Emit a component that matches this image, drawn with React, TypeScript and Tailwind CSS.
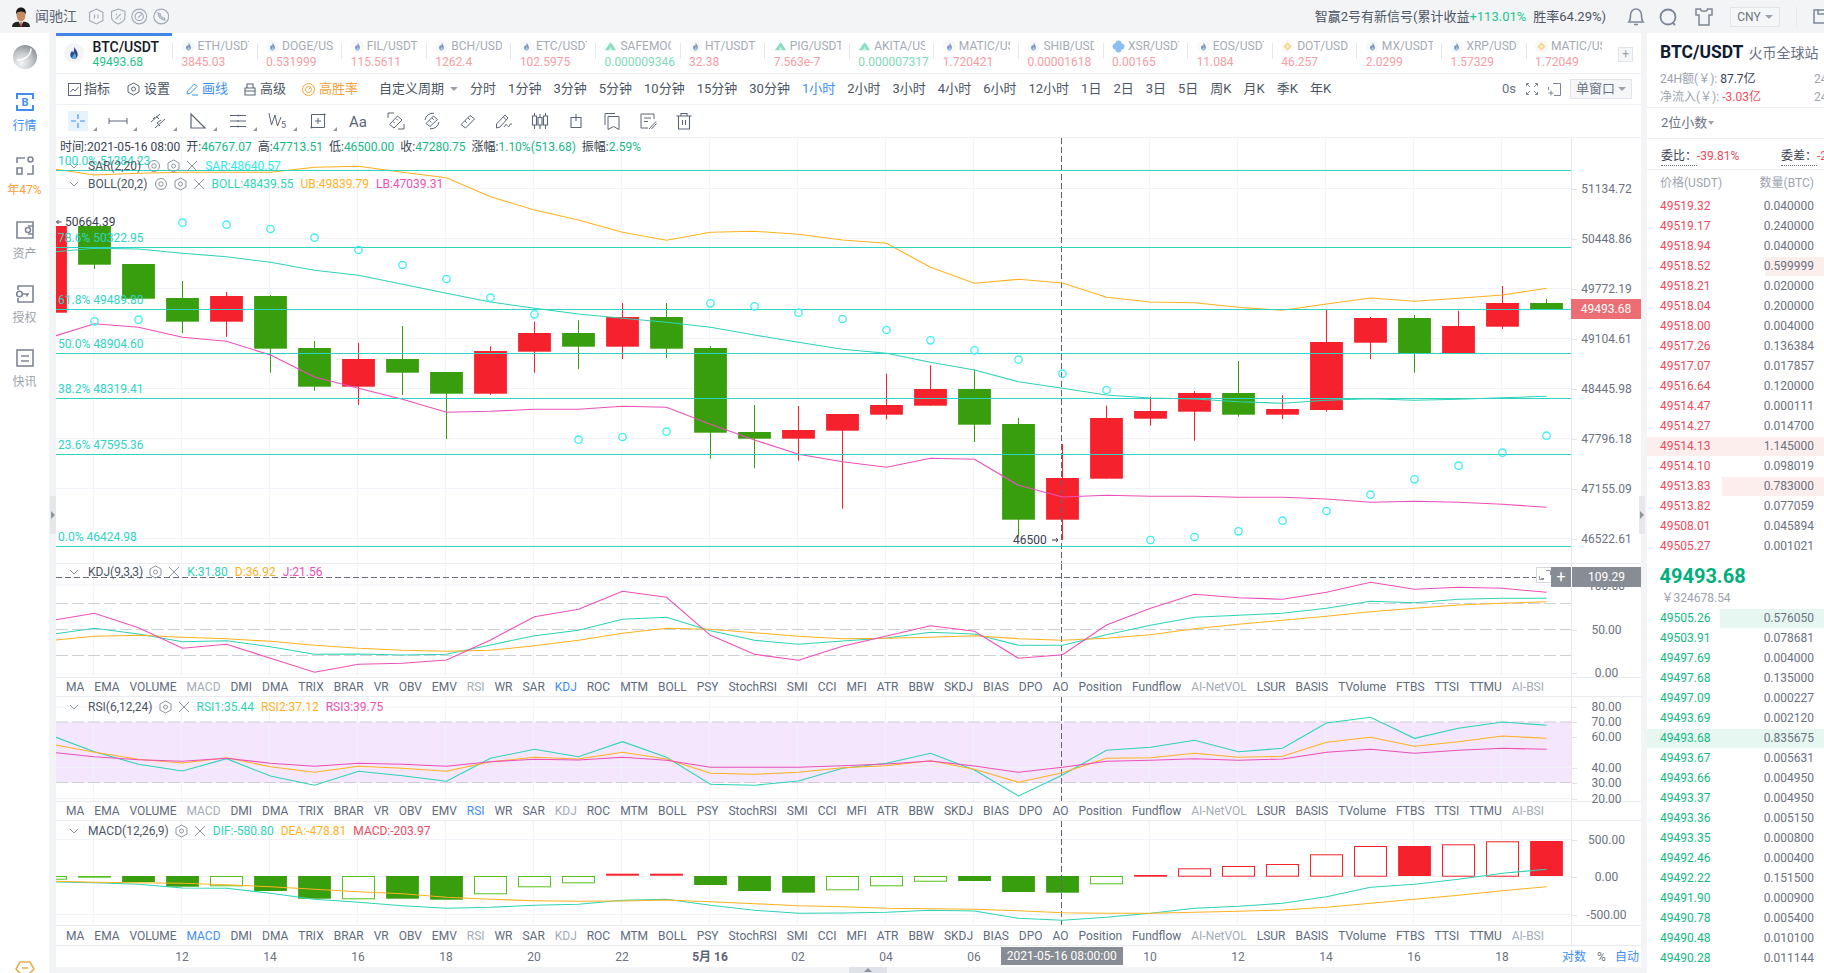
import React from "react";

const X = (i: number) => 50.5 + 44 * i;
const GREEN = "#389e0d";
const RED = "#f5222d";
const TEAL = "#2fd3b5";
const ORANGE = "#ffb11f";
const PINK = "#ec4fb8";
const FIB = "#2dd4c4";
const CROSS = 1061.5;

const candles: [number, number, number, number, "r" | "g"][] = [
  [226, 312.7, 226, 312.7, "r"], [226, 264.7, 226, 269, "g"], [264, 298.7, 264, 298.7, "g"], [298, 321.7, 281, 333, "g"],
  [296, 321.7, 292, 336.7, "r"], [296, 348.7, 295, 372.7, "g"], [348, 386.7, 341, 390.7, "g"], [359, 386.7, 342.7, 405, "r"],
  [359, 372.7, 326, 395, "g"], [372, 393.7, 372, 439, "g"], [351, 393.7, 346.3, 395, "r"], [333, 351.7, 321.7, 372.7, "r"],
  [333, 346.7, 320.3, 369.3, "g"], [317, 346.7, 303, 359, "r"], [317, 348.7, 303, 358, "g"], [348, 432.7, 346, 458.7, "g"],
  [432, 438.7, 405, 468.3, "g"], [430, 438.7, 406, 460.7, "r"], [414, 430.7, 414, 508.7, "r"], [405, 414.7, 373.7, 419.3, "r"],
  [389, 405.7, 365.3, 405.7, "r"], [389, 424.7, 369.3, 442, "g"], [424, 519.7, 418, 536.7, "g"], [478, 519.7, 444, 540, "r"],
  [418, 478.7, 405.7, 478.7, "r"], [411, 418.7, 396.7, 425.7, "r"], [393, 411.7, 391, 440.7, "r"], [393, 414.7, 361, 416.7, "g"],
  [409, 414.7, 395.3, 419, "r"], [342, 410, 310, 411.7, "r"], [318, 342.7, 317, 359, "r"], [318, 353, 315, 372.7, "g"],
  [326, 353, 310.7, 353, "r"], [303, 326.7, 286, 329, "r"], [303, 309, 299, 309, "g"],
];

const UB = [169.3, 175, 173.3, 172.3, 172.3, 172.3, 167.3, 166.3, 172.3, 177.7, 196.7, 210, 220, 232.3, 240.3, 232.3, 231.3, 234.3, 240, 243.3, 267.3, 283.3, 279.3, 283, 297.3, 302, 302.7, 307.3, 310.3, 304, 298, 301.3, 298.3, 295, 288.3];
const MB = [251.7, 248.3, 249, 253.3, 256.7, 262.3, 270.3, 275.3, 284.3, 293.3, 302, 308.3, 314, 318.3, 322.3, 327.3, 335, 342.3, 349.3, 353.3, 362.3, 370, 381.7, 388.3, 395, 398, 399, 401.7, 403.3, 400.3, 398.7, 400.3, 399.3, 397.7, 396.3];
const LB = [335.7, 323.7, 327.3, 337.3, 341.3, 355, 377, 388.3, 399.3, 412.3, 411.3, 409.3, 409.3, 406.3, 407.3, 424.3, 440, 454.3, 461.7, 467.3, 458.3, 459.3, 485.3, 497, 495.3, 496.3, 496.3, 497.3, 497.3, 499, 502.3, 501.3, 502.3, 504.3, 507.3];
const SAR = [0, 321.3, 319.7, 222.7, 224.7, 229, 237.7, 250, 265, 279, 297.7, 314.3, 439.7, 437, 431.7, 303.3, 306.3, 312.7, 319, 330, 340.3, 350.3, 359.7, 373.7, 390, 540, 537, 531.3, 520.7, 511, 494.7, 479.3, 465.7, 452.7, 435.7];

const K = [633.7, 628.3, 634, 641.7, 640.7, 646.7, 654.3, 654, 655, 654.3, 645, 635.7, 630.3, 619.3, 617.3, 630.7, 640.3, 644.3, 641, 638, 632.3, 634, 645.3, 645.3, 634.7, 625.3, 617.3, 615.3, 613.3, 608.3, 601.3, 602.7, 599.3, 598.3, 598.3];
const D = [640, 636.3, 635.3, 637.3, 638.7, 641.3, 645.3, 648.3, 650.3, 651.3, 650.3, 645.7, 640.3, 633.3, 628.3, 629.3, 632.7, 636.3, 638.7, 638.3, 637.3, 635.7, 638.7, 640.3, 638.3, 634.7, 628.7, 624.3, 620.3, 616.3, 611.7, 608.3, 605, 603.3, 601.7];
const J = [619.7, 613.3, 627.7, 648.3, 644.3, 658.3, 672.3, 664.3, 663.3, 660, 640, 616.7, 609.3, 591.3, 597.3, 635.3, 654.3, 660.3, 646.3, 636, 625.7, 631.3, 658.3, 654.7, 625, 608.3, 594.3, 597.7, 599.3, 592.3, 582.3, 589.3, 587.3, 588.3, 592.3];

const R1 = [737.3, 751.7, 764.3, 771, 758.7, 776, 785.3, 771.3, 775.7, 781.3, 758.3, 749.3, 756.7, 741.7, 757.3, 784.3, 785.3, 781, 768.3, 763.3, 753.3, 770, 796, 775, 750.3, 747.3, 740.3, 751.7, 748.3, 723, 717.3, 738.3, 728.3, 722, 725.3];
const R2 = [745, 752.3, 759.3, 763, 757.7, 766.7, 772.3, 766.3, 768.3, 771.3, 761.7, 757.3, 759, 752.3, 759, 773.3, 774.3, 772.3, 767.7, 765.7, 760.7, 769.3, 782.3, 772.7, 758.3, 757.7, 753.3, 757.3, 756.3, 742.3, 737.3, 746.3, 741.7, 736, 738.3];
const R3 = [752.7, 756.7, 759.7, 761.3, 758.3, 763.3, 766.3, 763.3, 764.3, 766.3, 761.7, 759.3, 760, 757.3, 760.3, 767.3, 767.3, 767.3, 765.7, 764, 761, 766, 772.3, 767.3, 761.3, 760.3, 758.7, 760.3, 759, 752.3, 749.3, 753.3, 750.3, 748.3, 749.3];

const DIF = [882, 882.7, 884.3, 888, 888.3, 893.3, 899.3, 902.3, 905.7, 908.3, 907.3, 905.3, 904.3, 900.3, 899.3, 905.3, 910.3, 913.3, 913, 912.3, 910.3, 911, 918.3, 920.3, 917.3, 913.3, 908.3, 906.3, 903.3, 896.7, 887.3, 884.3, 879.3, 873.3, 869.3];
const DEA = [881.3, 882.3, 882.7, 883.3, 884.7, 886.7, 889.3, 891.7, 893.7, 897.3, 899.3, 900.7, 901.3, 901, 900, 901.7, 903.7, 905.7, 906.7, 908.3, 908.7, 909.3, 910.7, 912.7, 913.3, 913.3, 912.3, 911.3, 910, 907.3, 903.3, 899.3, 895.3, 890.7, 886.7];
const BARS: [number, number, "s" | "h" | "l" | "r" | "o"][] = [
  [876, 878.7, "h"], [876, 877.7, "l"], [876, 882, "s"], [876, 886.7, "s"], [876, 885.3, "h"], [876, 891, "s"], [876, 898.7, "s"], [876, 898.3, "h"], [876, 898.7, "s"], [876, 899.7, "s"],
  [876, 893.3, "h"], [876, 886.3, "h"], [876, 882.3, "h"], [873.7, 875.7, "r"], [873.7, 875.7, "r"], [876, 885, "s"], [876, 891, "s"], [876, 892.7, "s"], [876, 889.3, "h"], [876, 885.3, "h"],
  [876, 880.7, "h"], [876, 881, "s"], [876, 892, "s"], [876, 892.7, "s"], [876, 883.3, "h"], [875, 876.7, "r"], [868.3, 875.7, "o"], [866, 875.7, "o"], [864, 875.7, "o"], [854.3, 875.7, "o"],
  [846, 875.7, "o"], [846, 876, "r"], [844.3, 875.7, "o"], [841.3, 875.7, "o"], [841, 876, "r"],
];

const pts = (a: number[]) => a.map((y, i) => `${i === 0 ? 56 : X(i)},${y}`).join(" ");
const VGRID = Array.from({ length: 17 }, (_, i) => 93.3 + 88 * i);

function Grid({ top, h, lines }: { top: number; h: number; lines: number[] }) {
  return (
    <g stroke="#f1f3f8" strokeWidth="1">
      {VGRID.map((x) => <line key={x} x1={x} x2={x} y1={top} y2={top + h} />)}
      {lines.map((y) => <line key={y} x1={56} x2={1571} y1={y} y2={y} />)}
    </g>
  );
}
const Cross = ({ top, h }: { top: number; h: number }) => (
  <line x1={CROSS} x2={CROSS} y1={top} y2={top + h} stroke="#5f6670" strokeDasharray="6 3" strokeWidth="1" />
);
const Line = ({ d, c }: { d: number[]; c: string }) => <polyline points={pts(d)} fill="none" stroke={c} strokeWidth="1.1" />;

function Axis({ top, ticks }: { top: number; ticks: [number, string][] }) {
  return (
    <div className="relative w-[70px] border-l border-[#e6e8ed] text-[12px] text-[#6b7280]">
      {ticks.map(([y, t]) => (
        <React.Fragment key={t}>
          <div className="absolute left-0 h-px w-[5px] bg-[#e0e3e8]" style={{ top: y - top }} />
          <div className="absolute left-0 w-full text-center leading-4" style={{ top: y - top - 8 }}>{t}</div>
        </React.Fragment>
      ))}
    </div>
  );
}

const Gear = () => (
  <svg width="13" height="14" viewBox="0 0 13 14" fill="none" stroke="#8d95a1" strokeWidth="1"><path d="M6.5 1 L12 4 V10 L6.5 13 L1 10 V4 Z" /><circle cx="6.5" cy="7" r="2" /></svg>
);
const Eye = () => (
  <svg width="14" height="14" viewBox="0 0 14 14" fill="none" stroke="#8d95a1" strokeWidth="1"><circle cx="7" cy="7" r="5.5" /><circle cx="7" cy="7" r="2.2" /></svg>
);
const Close = () => (
  <svg width="12" height="12" viewBox="0 0 12 12" fill="none" stroke="#8d95a1" strokeWidth="1"><path d="M1 1 L11 11 M11 1 L1 11" /></svg>
);
const Chev = () => (
  <svg width="10" height="6" viewBox="0 0 10 6" fill="none" stroke="#8d95a1" strokeWidth="1"><path d="M1 1 L5 5 L9 1" /></svg>
);

const NAMES = ["MA", "EMA", "VOLUME", "MACD", "DMI", "DMA", "TRIX", "BRAR", "VR", "OBV", "EMV", "RSI", "WR", "SAR", "KDJ", "ROC", "MTM", "BOLL", "PSY", "StochRSI", "SMI", "CCI", "MFI", "ATR", "BBW", "SKDJ", "BIAS", "DPO", "AO", "Position", "Fundflow", "AI-NetVOL", "LSUR", "BASIS", "TVolume", "FTBS", "TTSI", "TTMU", "AI-BSI"];
const DIM = ["MACD", "RSI", "KDJ", "AI-NetVOL", "AI-BSI"];

function IndicatorRow({ active, h }: { active: string; h: string }) {
  return (
    <div className={`flex ${h} border-t border-b border-[#e9ebef]`}>
      <div className="flex w-[1515px] items-center gap-[9.95px] overflow-hidden pl-[10px] text-[12px] whitespace-nowrap">
        {NAMES.map((n) => (
          <span key={n} className={n === active ? "text-[#3f8ef0]" : DIM.includes(n) ? "text-[#a4abb6]" : "text-[#5f6b7c]"}>{n}</span>
        ))}
      </div>
      <div className="w-[70px] border-l border-[#e6e8ed]" />
    </div>
  );
}

function Legend({ top, name, icons, vals }: { top: string; name: string; icons?: boolean; vals: [string, string][] }) {
  return (
    <div className={`absolute left-[13px] ${top} flex h-4 items-center text-[12px] leading-4 whitespace-nowrap`}>
      <span className="mr-[9px] flex w-[10px] justify-center"><Chev /></span>
      <span className="mr-[6px] text-[#4b5563]">{name}</span>
      {icons && <span className="mr-[6px] flex"><Eye /></span>}
      <span className="mr-[6px] flex"><Gear /></span>
      <span className="mr-[7px] flex"><Close /></span>
      <div className="flex gap-[7px]">
        {vals.map(([t, c]) => <span key={t} style={{ color: c }}>{t}</span>)}
      </div>
    </div>
  );
}

type Coin = "h" | "m" | "b" | "x";
const TABS: [string, string, "r" | "g", Coin][] = [
  ["ETH/USDT", "3845.03", "r", "h"], ["DOGE/USDT", "0.531999", "r", "h"], ["FIL/USDT", "115.5611", "r", "h"], ["BCH/USDT", "1262.4", "r", "h"],
  ["ETC/USDT", "102.5975", "r", "h"], ["SAFEMOON", "0.000009346", "g", "m"], ["HT/USDT", "32.38", "r", "h"], ["PIG/USDT", "7.563e-7", "r", "m"],
  ["AKITA/USDT", "0.000007317", "g", "m"], ["MATIC/USDT", "1.720421", "r", "h"], ["SHIB/USDT", "0.00001618", "r", "h"], ["XSR/USDT", "0.00165", "r", "x"],
  ["EOS/USDT", "11.084", "r", "h"], ["DOT/USDT", "46.257", "r", "b"], ["MX/USDT", "2.0299", "r", "h"], ["XRP/USDT", "1.57329", "r", "h"], ["MATIC/USDT", "1.72049", "r", "b"],
];

function CoinIcon({ t, s = 14, dim }: { t: Coin; s?: number; dim?: boolean }) {
  return (
    <svg width={s} height={s} viewBox="0 0 14 14" className={`shrink-0 ${dim ? "opacity-60" : ""}`}>
      {t !== "x" && t !== "m" && <circle cx="7" cy="7" r="7" fill="#f2f4f7" />}
      {t === "h" && (
        <>
          <path d="M7.3 2.6 C7.6 4.2 9.6 5.4 9.6 8 C9.6 10 8.3 11.2 7 11.2 C5.6 11.2 4.4 10 4.4 8.3 C4.4 6.9 5.2 6.1 5.7 5.4 C5.9 6.1 6.2 6.5 6.5 6.7 C7.1 5.5 7 3.9 7.3 2.6 Z" fill="#2a4b8d" />
          <path d="M7.3 6.8 C7.7 8 8.7 8.7 8.5 9.9 C8.3 10.7 7.7 11.2 7 11.2 C6.1 11.2 5.7 10.5 5.8 9.9 C5.9 9 6.9 8.3 7.3 6.8 Z" fill="#5aa6e8" />
        </>
      )}
      {t === "m" && (
        <>
          <path d="M1 11 L5 5 L7 2.5 L9.5 5.5 L13 11 Z" fill="#3fc8a0" />
          <path d="M5 11 L7 7 L9 11 Z" fill="#a8e8d4" />
        </>
      )}
      {t === "b" && <path d="M7 2.5 L11.5 7 L7 11.5 L2.5 7 Z M7 5.5 L5.5 7 L7 8.5 L8.5 7 Z" fill="#f3c13c" fillRule="evenodd" />}
      {t === "x" && (
        <>
          <circle cx="7" cy="3.8" r="3.2" fill="#3f93e8" /><circle cx="7" cy="10.2" r="3.2" fill="#3f93e8" />
          <circle cx="3.8" cy="7" r="3.2" fill="#3f93e8" /><circle cx="10.2" cy="7" r="3.2" fill="#3f93e8" />
        </>
      )}
    </svg>
  );
}

const S = { fill: "none", stroke: "#5b6576", strokeWidth: 1 };
const DRAW: React.ReactNode[] = [
  <path d="M10 3v5M10 12v5M3 10h5M12 10h5" fill="none" stroke="#3f8ef0" strokeWidth="1.1" />,
  <path d="M1 7v6M19 7v6M1 10h18" {...S} />,
  <path d="M3 11 L12 3 M7 17 L17 8 M5 8 l2-2 M8 5 l3 3 M9 12 l3 3 M13 9 l-4 3" {...S} />,
  <path d="M3 3 V17 H17 Z" {...S} strokeWidth="1.2" />,
  <path d="M2 4.5h16M2 10h16M2 15.5h16M10 3.5v2M10 9v2M10 14.5v2" {...S} />,
  <>
    <path d="M1 2 L3.5 14 L7 4 L9.5 15 L13 6" {...S} />
    <text x="13" y="17" fontSize="9" fill="#5b6576">5</text>
  </>,
  <>
    <path d="M3.5 3.5h13v13h-13z M10 7v6 M7 10h6" {...S} />
    <circle cx="16.5" cy="3.5" r="1.1" fill="#5b6576" /><circle cx="3.5" cy="16.5" r="1.1" fill="#5b6576" />
  </>,
  <text x="10" y="15.5" textAnchor="middle" fontSize="15" fill="#5b6576">Aa</text>,
  <path d="M2 7V2h6 M18 13v5h-6 M3.5 13.5 L11.5 5 L16 9 L8 17 Z M7 10.5 l1.8 1.8 M10 7.5 l1.8 1.8" {...S} />,
  <path d="M3 9 A8 8 0 0 1 12 2.3 M17 11 A8 8 0 0 1 8 17.7 M4 12.5 L11.5 5 L15.5 8.5 L8 15.5 Z M7.5 9.5 l1.8 1.8 M10 7 l1.8 1.8" {...S} />,
  <path d="M3 13.5 L12 4.5 L16.5 8 L7.5 17 Z M7 10 l1.8 1.8 M10 7 l1.8 1.8" {...S} />,
  <path d="M2.5 17 L2.5 13 L11 4 L14 7 L6 16 L2.5 17 Z M9.5 6 l3 3 M10 16 q2-4 3.5-1.5 t2 0 t2.5-1.5" {...S} />,
  <path d="M2.5 5h4v9h-4z M8 6.5h4v7.5H8z M13.5 5h4v9h-4z M4.5 2v3 M4.5 14v4 M10 3v3.5 M10 14v4 M15.5 2v3 M15.5 14v4" {...S} strokeWidth="1.1" />,
  <path d="M5 6.5h10v10H5z M10 3v7" {...S} strokeWidth="1.1" />,
  <path d="M3 14V2.5h10 M6 5.5h11v13 l-5.5-3 L6 18.5Z" {...S} />,
  <path d="M16 8V3H3v14h7 M6 7h7 M6 10.5h4 M11 18 L18 10.5 M13.5 18 l5-5.5" {...S} />,
  <path d="M2.5 5h15 M7 5V2.5h6V5 M4.5 5v13h11V5 M8.5 9v5 M11.5 9v5" {...S} strokeWidth="1.1" />,
];

const PERIODS = ["分时", "1分钟", "3分钟", "5分钟", "10分钟", "15分钟", "30分钟", "1小时", "2小时", "3小时", "4小时", "6小时", "12小时", "1日", "2日", "3日", "5日", "周K", "月K", "季K", "年K"];

const ASKS: [string, string][] = [["49519.32", "0.040000"], ["49519.17", "0.240000"], ["49518.94", "0.040000"], ["49518.52", "0.599999"], ["49518.21", "0.020000"], ["49518.04", "0.200000"], ["49518.00", "0.004000"], ["49517.26", "0.136384"], ["49517.07", "0.017857"], ["49516.64", "0.120000"], ["49514.47", "0.000111"], ["49514.27", "0.014700"], ["49514.13", "1.145000"], ["49514.10", "0.098019"], ["49513.83", "0.783000"], ["49513.82", "0.077059"], ["49508.01", "0.045894"], ["49505.27", "0.001021"]];
const BIDS: [string, string][] = [["49505.26", "0.576050"], ["49503.91", "0.078681"], ["49497.69", "0.004000"], ["49497.68", "0.135000"], ["49497.09", "0.000227"], ["49493.69", "0.002120"], ["49493.68", "0.835675"], ["49493.67", "0.005631"], ["49493.66", "0.004950"], ["49493.37", "0.004950"], ["49493.36", "0.005150"], ["49493.35", "0.000800"], ["49492.46", "0.000400"], ["49492.22", "0.151500"], ["49491.90", "0.000900"], ["49490.78", "0.005400"], ["49490.48", "0.010100"], ["49490.28", "0.011144"]];

function Book({ rows, color, bg, widths }: { rows: [string, string][]; color: string; bg: string; widths: Record<string, number> }) {
  return (
    <div className="flex flex-col text-[12px]">
      {rows.map(([p, q]) => (
        <div key={p} className="relative flex h-5 items-center justify-between pl-[13px] pr-[10px]">
          {widths[p] && <div className="absolute inset-y-[0.5px] right-0" style={{ width: widths[p], background: bg }} />}
          <span className="relative" style={{ color }}>{p}</span>
          <span className="relative text-[#6b7280]">{q}</span>
        </div>
      ))}
    </div>
  );
}

function NavItem({ icon, label, color }: { icon: React.ReactNode; label: string; color: string }) {
  return (
    <div className="flex h-[64px] flex-col items-center pt-[10px]">
      <div className="flex h-5 items-center justify-center">{icon}</div>
      <div className="mt-[6px] text-[12px] leading-4" style={{ color }}>{label}</div>
    </div>
  );
}

const NS = { fill: "none", stroke: "#7d8696", strokeWidth: 1.6 };

export default function App() {
  return (
    <div className="flex h-[973px] w-[1824px] flex-col overflow-hidden bg-[#f3f4f6] font-['Roboto','Noto_Sans_CJK_SC',sans-serif] text-[12px]">
      {/* header */}
      <header className="flex h-[33px] shrink-0 items-center pl-[12px]">
        <svg width="18" height="21" viewBox="0 0 18 21" className="shrink-0">
          <rect width="18" height="21" fill="#f4f4f4" />
          <path d="M0 21 C0 16.5 4 15.5 9 15.5 C14 15.5 18 16.5 18 21 Z" fill="#26221f" />
          <path d="M6.5 15 L9 20.5 L11.5 15 Z" fill="#f4f4f4" />
          <path d="M8.4 16 L9.6 16 L9.8 20.5 L8.2 20.5 Z" fill="#b3362e" />
          <ellipse cx="9" cy="9.5" rx="4.4" ry="6" fill="#c58c66" />
          <path d="M4.2 8.5 C3.6 3.5 6 1.5 9 1.5 C12 1.5 14.4 3.5 13.8 8.5 C13 6 11 5.4 9 5.4 C7 5.4 5 6 4.2 8.5 Z" fill="#191919" />
        </svg>
        <span className="ml-[5px] text-[14px] text-[#5b6470]">闻驰江</span>
        <div className="ml-[11px] flex gap-[5px]">
          {[
            <path key="a" d="M8 .8 L14.5 4 V12 L8 15.2 L1.5 12 V4 Z M6.3 6v4 M9.7 6v4" fill="none" stroke="#a4abb6" strokeWidth="1.1" />,
            <path key="b" d="M8 .8 L14.5 3 V9 C14.5 12 11 14 8 15.2 C5 14 1.5 12 1.5 9 V3 Z M10.5 5.5 L5.5 10.5 M5.7 6h1 M9.5 10h1" fill="none" stroke="#a4abb6" strokeWidth="1.1" />,
            <g key="c" fill="none" stroke="#a4abb6" strokeWidth="1.1"><circle cx="8" cy="8" r="7.2" /><circle cx="8" cy="8" r="4" /><path d="M7 9 L11 5" /></g>,
            <g key="d" fill="none" stroke="#a4abb6" strokeWidth="1.1"><circle cx="8" cy="8" r="7.2" /><path d="M5 4.5 C5 8 8 11.5 11.5 11.5 L11 9.5 L9.5 9.5 L7 7 L7 5.5 Z" /></g>,
          ].map((n, i) => <svg key={i} width="16.5" height="17" viewBox="0 0 16 16">{n}</svg>)}
        </div>
        <div className="ml-auto mr-[-1px] flex items-center">
          <span className="text-[13px] text-[#4b5563]">智赢2号有新信号(累计收益<span className="text-[#1fc48f]">+113.01%</span><span className="ml-[7px]">胜率64.29%)</span></span>
          <svg className="ml-[21px]" width="18" height="20" viewBox="0 0 18 20" fill="none" stroke="#7d8696" strokeWidth="1.6"><path d="M2 15 C3.5 13 3.5 11 3.5 8 C3.5 4.5 6 2 9 2 C12 2 14.5 4.5 14.5 8 C14.5 11 14.5 13 16 15 Z M7 17.5 h4" /></svg>
          <svg className="ml-[14px]" width="18" height="20" viewBox="0 0 18 20" fill="none" stroke="#7d8696" strokeWidth="1.8"><circle cx="9" cy="10" r="7.5" /><path d="M13.5 15.5 L16 18" /></svg>
          <svg className="ml-[18px]" width="18" height="18" viewBox="0 0 18 18" fill="none" stroke="#7d8696" strokeWidth="1.5"><path d="M5.5 1 H1 V7 H4 V17 H14 V7 H17 V1 H12.5 C12.5 4 5.5 4 5.5 1 Z" /></svg>
          <div className="ml-[17px] flex h-5 w-[50px] items-center justify-center gap-[4px] border border-[#e2e4e8] bg-[#f5f6f7] text-[12px] text-[#6b7280]">
            CNY<span className="h-0 w-0 border-x-[4px] border-t-[4px] border-x-transparent border-t-[#9ca3af]" />
          </div>
          <div className="ml-[16px] h-[20px] w-px bg-[#e5e7eb]" />
          <svg className="ml-[16px]" width="12" height="17" viewBox="0 0 12 17" fill="none" stroke="#7d8696" strokeWidth="1.5"><path d="M12 2 H1 V15 H12 M5 1 V6 H12" /></svg>
        </div>
      </header>

      <div className="relative flex min-h-0 flex-1">
        {/* sidebar */}
        <aside className="flex w-[49px] shrink-0 flex-col overflow-hidden bg-white">
          <div className="flex h-[49px] shrink-0 items-start justify-center pt-[12px]">
            <svg width="24" height="24" viewBox="0 0 24 24">
              <defs>
                <radialGradient id="sp" cx="35%" cy="75%" r="80%">
                  <stop offset="0%" stopColor="#f4f5f6" />
                  <stop offset="55%" stopColor="#c4c7ca" />
                  <stop offset="100%" stopColor="#8a8e93" />
                </radialGradient>
              </defs>
              <circle cx="12" cy="12" r="12" fill="url(#sp)" />
              <path d="M4 15 C10 16 18 11 18 3.5" fill="none" stroke="#fff" strokeWidth="1.5" />
            </svg>
          </div>
          <NavItem color="#3f8ef0" label="行情" icon={
            <svg width="18" height="18" viewBox="0 0 18 18"><path d="M1 6V1h16v5 M1 12v5h16v-5" fill="none" stroke="#3f8ef0" strokeWidth="2" /><text x="9" y="13" textAnchor="middle" fontSize="11" fontWeight="700" fill="#3f8ef0">B</text></svg>
          } />
          <NavItem color="#f5a23c" label="年47%" icon={
            <svg width="18" height="20" viewBox="0 0 18 20"><path d="M9 2H1v5 M17 9v9h-6" {...NS} /><rect x="1" y="12" width="5" height="6" {...NS} /><circle cx="14.5" cy="3.5" r="2.5" {...NS} /></svg>
          } />
          <NavItem color="#9aa1ac" label="资产" icon={
            <svg width="18" height="18" viewBox="0 0 18 18"><path d="M17 1H1v16h16z" {...NS} /><circle cx="12" cy="9" r="2.5" {...NS} /><path d="M17 5h-5 M17 13h-5" {...NS} /></svg>
          } />
          <NavItem color="#9aa1ac" label="授权" icon={
            <svg width="18" height="18" viewBox="0 0 18 18"><path d="M2 5V1h15v16H2v-4" {...NS} /><circle cx="3.5" cy="9" r="2.8" {...NS} /><path d="M7 9h6 M11 9v2.5" {...NS} /></svg>
          } />
          <NavItem color="#9aa1ac" label="快讯" icon={
            <svg width="18" height="18" viewBox="0 0 18 18"><rect x="1" y="1" width="16" height="16" {...NS} /><path d="M5 7h8 M5 12h8" {...NS} /></svg>
          } />
          <svg className="mx-auto mb-[-7px] mt-auto shrink-0" width="20" height="20" viewBox="0 0 20 20" fill="none" stroke="#e8b04c" strokeWidth="1.6"><path d="M5 2H15 L19 9 L10 18 L1 9 Z M7 8h6" /></svg>
        </aside>
        <div className="w-[7px] shrink-0" />

        {/* main */}
        <main className="flex h-[934px] w-[1585px] shrink-0 flex-col bg-white">
          {/* tabs */}
          <div className="flex h-10 shrink-0 items-stretch overflow-hidden">
            <div className="flex w-[116px] shrink-0 items-start gap-[8.5px] border-t-[3px] border-[#4285e8] pl-[8px]">
              <div className="mt-[7px] flex h-5 w-5 items-center justify-center"><CoinIcon t="h" s={20} /></div>
              <div className="mt-[3px] flex flex-col">
                <span className="text-[14px] leading-[16px] font-medium text-[#111827]">BTC/USDT</span>
                <span className="text-[12px] leading-[14px] text-[#1dbf8e]">49493.68</span>
              </div>
            </div>
            {TABS.map(([n, p, c, t], i) => (
              <div key={i} className="flex w-[84.6px] shrink-0 items-start">
                <div className="mt-[10px] h-[16px] w-px bg-[#e5e7eb]" />
                <div className="flex flex-col pl-[8.5px] pt-[5px]">
                  <div className="flex h-4 items-center gap-[2px]">
                    <CoinIcon t={t} s={13} dim />
                    <span className="ml-[1px] w-[51px] overflow-hidden text-[12px] whitespace-nowrap text-[#a4abb6]">{n}</span>
                  </div>
                  <span className={`text-[12px] leading-4 ${c === "r" ? "text-[#f79da3]" : "text-[#7fd9ba]"}`}>{p}</span>
                </div>
              </div>
            ))}
            <div className="mt-[14px] ml-[8px] flex h-[14.5px] w-[15px] shrink-0 items-center justify-center border border-[#e2e4e8] bg-[#f5f6f7] text-[12px] leading-none text-[#9ca3af]">+</div>
          </div>

          {/* toolbar 1 */}
          <div className="flex h-[31px] shrink-0 items-center border-t border-[#eef0f3] pl-[12px] text-[13px] whitespace-nowrap text-[#4b5563]">
            <svg width="13" height="13" viewBox="0 0 13 13" fill="none" stroke="#5b6576" strokeWidth="1"><rect x="0.5" y="0.5" width="12" height="12" /><path d="M2.5 9 L5 6 L7 8 L10.5 4" /></svg>
            <span className="ml-[3px]">指标</span>
            <svg className="ml-[17px]" width="13" height="14" viewBox="0 0 13 14" fill="none" stroke="#5b6576" strokeWidth="1"><path d="M6.5 1 L12 4 V10 L6.5 13 L1 10 V4 Z" /><circle cx="6.5" cy="7" r="2" /></svg>
            <span className="ml-[4px]">设置</span>
            <svg className="ml-[16px]" width="13" height="14" viewBox="0 0 13 14" fill="none" stroke="#3f8ef0" strokeWidth="1"><path d="M1 12 L1.5 9 L8.5 2 L11 4.5 L4 11.5 Z M6 13h6" /></svg>
            <span className="ml-[3px] text-[#3f8ef0]">画线</span>
            <svg className="ml-[16px]" width="12" height="13" viewBox="0 0 12 13" fill="none" stroke="#5b6576" strokeWidth="1.1"><path d="M3 5V1h6v4 M1 5h10v7H1z M1 8h10" /></svg>
            <span className="ml-[4px]">高级</span>
            <svg className="ml-[16px]" width="13" height="13" viewBox="0 0 13 13" fill="none" stroke="#f5a23c" strokeWidth="1"><circle cx="6.5" cy="6.5" r="6" /><circle cx="6.5" cy="6.5" r="3" /><path d="M6.5 6.5 L9 4" /></svg>
            <span className="ml-[4px] text-[#f5a23c]">高胜率</span>
            <span className="ml-[21px]">自定义周期</span>
            <span className="ml-[6px] h-0 w-0 border-x-[4px] border-t-[4px] border-x-transparent border-t-[#9ca3af]" />
            <div className="ml-[12px] flex gap-3">
              {PERIODS.map((p) => <span key={p} className={p === "1小时" ? "text-[#3f8ef0]" : ""}>{p}</span>)}
            </div>
            <div className="ml-auto flex items-center pr-[9px]">
              <span className="text-[#6b7280]">0s</span>
              <svg className="ml-[10px]" width="12" height="12" viewBox="0 0 12 12" fill="none" stroke="#7d8696" strokeWidth="1"><path d="M0.5 3V.5H3 M9 .5h2.5V3 M11.5 9v2.5H9 M3 11.5H.5V9 M.5 .5 L4 4 M11.5 .5 L8 4 M.5 11.5 L4 8 M11.5 11.5 L8 8" /></svg>
              <svg className="ml-[10px]" width="13" height="13" viewBox="0 0 13 13" fill="none" stroke="#7d8696" strokeWidth="1"><path d="M5 .5h7.5v12H6 M.5 10h5 M3 7.5v5 M.5 7V4" /></svg>
              <div className="ml-[9px] flex h-5 w-[62px] items-center justify-center gap-[3px] border border-[#e2e4e8] bg-[#f5f6f7] text-[13px] text-[#6b7280]">
                单窗口<span className="h-0 w-0 border-x-[4px] border-t-[4px] border-x-transparent border-t-[#9ca3af]" />
              </div>
            </div>
          </div>

          {/* toolbar 2 */}
          <div className="flex h-[33px] shrink-0 items-center border-t border-[#eef0f3] pl-[2px]">
            {DRAW.map((d, i) => (
              <div key={i} className={`relative flex h-5 items-center justify-center ${i < 8 ? "w-10" : "w-9"}`}>
                <svg width="20" height="20" viewBox="0 0 20 20" className={i === 0 ? "bg-[#e8f2fd]" : ""}>{d}</svg>
                {i < 7 && <span className="absolute bottom-[0px] left-[35px] h-0 w-0 border-b-[4px] border-l-[4px] border-b-[#8d95a1] border-l-transparent" />}
              </div>
            ))}
          </div>

          {/* main chart */}
          <div className="relative flex h-[426px] shrink-0 border-t border-[#eef0f3]">
            <div className="relative w-[1515px]">
              <svg className="absolute inset-0" width="1515" height="425" viewBox="56 138 1515 425">
                <Grid top={138} h={425} lines={[188.5, 238.5, 288.5, 338.5, 388.5, 438.5, 488.5, 538.5]} />
                {candles.map(([t, b, wt, wb, c], i) => (
                  <g key={i} fill={c === "r" ? RED : GREEN}>
                    <rect x={X(i) - 0.5} y={wt} width="1" height={wb - wt} />
                    <rect x={X(i) - 16.4} y={t} width="32.8" height={b - t} />
                  </g>
                ))}
                <Cross top={138} h={425} />
                <Line d={UB} c={ORANGE} />
                <Line d={MB} c={TEAL} />
                <Line d={LB} c={PINK} />
                {[170.5, 247.5, 309.5, 353.5, 398.5, 454.5, 546.5].map((y) => <line key={y} x1={56} x2={1571} y1={y} y2={y} stroke={FIB} strokeWidth="1" />)}
                {SAR.map((y, i) => i > 0 && <circle key={i} cx={X(i)} cy={y} r="3.7" fill="none" stroke="#3ef0f0" strokeWidth="1.3" />)}
                <g fontSize="12" fill={FIB}>
                  <text x="58" y="165">100.0% 51384.23</text>
                  <text x="58" y="241.5">78.6% 50322.95</text>
                  <text x="58" y="303.5">61.8% 49489.80</text>
                  <text x="58" y="347.5">50.0% 48904.60</text>
                  <text x="58" y="393">38.2% 48319.41</text>
                  <text x="58" y="449">23.6% 47595.36</text>
                  <text x="58" y="541">0.0% 46424.98</text>
                </g>
                <text x="65" y="226" fontSize="12" fill="#374151">50664.39</text>
                <path d="M56.5 222 h5 M56.5 222 l2-2 M56.5 222 l2 2" stroke="#374151" strokeWidth="1" fill="none" />
                <text x="1013" y="544" fontSize="12" fill="#374151">46500</text>
                <path d="M1052 540 h6 M1058 540 l-2-2 M1058 540 l-2 2" stroke="#374151" strokeWidth="1" fill="none" />
              </svg>
              <div className="absolute left-[4px] top-[1px] flex h-4 items-center text-[12px] leading-4 whitespace-nowrap text-[#374151]">
                时间:2021-05-16 08:00
                {[["开:", "46767.07"], ["高:", "47713.51"], ["低:", "46500.00"], ["收:", "47280.75"], ["涨幅:", "1.10%(513.68)"], ["振幅:", "2.59%"]].map(([a, b]) => (
                  <span key={a} className="ml-[6px]">{a}<span className="text-[#14b885]">{b}</span></span>
                ))}
              </div>
              <Legend top="top-[20px]" name="SAR(2,20)" icons vals={[["SAR:48640.57", "#2bebea"]]} />
              <Legend top="top-[38px]" name="BOLL(20,2)" icons vals={[["BOLL:48439.55", "#2fd3b5"], ["UB:49839.79", ORANGE], ["LB:47039.31", PINK]]} />
            </div>
            <Axis top={138} ticks={[[188.5, "51134.72"], [238.5, "50448.86"], [288.5, "49772.19"], [338.5, "49104.61"], [388.5, "48445.98"], [438.5, "47796.18"], [488.5, "47155.09"], [538.5, "46522.61"]]} />
            <div className="absolute left-[1515px] top-[161px] flex h-5 w-[70px] items-center justify-center bg-[#ec6d73] text-[12px] text-white">49493.68</div>
          </div>

          {/* KDJ */}
          <div className="relative flex h-[114px] shrink-0 border-t border-[#e9ebef]">
            <div className="relative w-[1515px]">
              <svg className="absolute inset-0" width="1515" height="113" viewBox="56 564 1515 113">
                <Grid top={564} h={113} lines={[585, 674]} />
                <g stroke="#cfd0d4" strokeDasharray="12 4">
                  <line x1="56" x2="1571" y1="603.5" y2="603.5" />
                  <line x1="56" x2="1571" y1="629.5" y2="629.5" />
                  <line x1="56" x2="1571" y1="655.5" y2="655.5" />
                </g>
                <line x1="56" x2="1571" y1="577.5" y2="577.5" stroke="#666c75" strokeDasharray="6 3" />
                <Cross top={564} h={113} />
                <Line d={K} c={TEAL} />
                <Line d={D} c={ORANGE} />
                <Line d={J} c={PINK} />
              </svg>
              <Legend top="top-[0px]" name="KDJ(9,3,3)" vals={[["K:31.80", TEAL], ["D:36.92", ORANGE], ["J:21.56", PINK]]} />
            </div>
            <Axis top={564} ticks={[[586, "100.00"], [629.5, "50.00"], [673, "0.00"]]} />
            <div className="absolute left-[1479.5px] top-[3px] flex h-[16px] w-[18px] items-center justify-center border border-[#d4d7dc] bg-white">
              <svg width="12" height="10" viewBox="0 0 12 10" fill="none" stroke="#8d95a1" strokeWidth="1"><path d="M7 .5h4.5V5 M.5 6v3.5H5 M2 8.5h3" /></svg>
            </div>
            <div className="absolute left-[1495px] top-[3px] flex h-5 w-[90px] items-center bg-[#888c94] text-[12px] text-white">
              <span className="w-[20px] text-center text-[16px] leading-none">+</span>
              <span className="h-full w-px bg-white" />
              <span className="flex-1 text-center">109.29</span>
            </div>
          </div>
          <IndicatorRow active="KDJ" h="h-[20px]" />

          {/* RSI */}
          <div className="relative flex h-[104px] shrink-0">
            <div className="relative w-[1515px]">
              <svg className="absolute inset-0" width="1515" height="104" viewBox="56 697 1515 104">
                <rect x="56" y="722" width="1515" height="60.5" fill="#f3e6fd" />
                <Grid top={697} h={104} lines={[707, 767.5, 798.5]} />
                <g stroke="#cfcbd8" strokeDasharray="12 4">
                  <line x1="56" x2="1571" y1="722" y2="722" />
                  <line x1="56" x2="1571" y1="782.5" y2="782.5" />
                </g>
                <Cross top={697} h={104} />
                <Line d={R1} c={TEAL} />
                <Line d={R2} c={ORANGE} />
                <Line d={R3} c={PINK} />
              </svg>
              <Legend top="top-[1.5px]" name="RSI(6,12,24)" vals={[["RSI1:35.44", TEAL], ["RSI2:37.12", ORANGE], ["RSI3:39.75", PINK]]} />
            </div>
            <Axis top={697} ticks={[[706.5, "80.00"], [722, "70.00"], [737, "60.00"], [767.5, "40.00"], [782.5, "30.00"], [798.5, "20.00"]]} />
          </div>
          <IndicatorRow active="RSI" h="h-[20px]" />

          {/* MACD */}
          <div className="relative flex h-[104px] shrink-0">
            <div className="relative w-[1515px]">
              <svg className="absolute inset-0" width="1515" height="104" viewBox="56 821 1515 104">
                <Grid top={821} h={104} lines={[839.5, 876.5, 914.5]} />
                {BARS.map(([t, b, k], i) => {
                  const hollow = k === "h" || k === "o";
                  const c = k === "s" ? GREEN : k === "h" || k === "l" ? "#52c41a" : RED;
                  return hollow ? (
                    <rect key={i} x={X(i) - 16} y={t + 0.5} width="32" height={b - t} fill="#fff" stroke={c} strokeWidth="1" />
                  ) : (
                    <rect key={i} x={X(i) - 16.4} y={t} width="32.8" height={b - t} fill={c} />
                  );
                })}
                <Cross top={821} h={104} />
                <Line d={DIF} c={TEAL} />
                <Line d={DEA} c={ORANGE} />
              </svg>
              <Legend top="top-[1.5px]" name="MACD(12,26,9)" vals={[["DIF:-580.80", TEAL], ["DEA:-478.81", ORANGE], ["MACD:-203.97", "#f04a5b"]]} />
            </div>
            <Axis top={821} ticks={[[839.5, "500.00"], [876.5, "0.00"], [914.5, "-500.00"]]} />
          </div>
          <IndicatorRow active="MACD" h="h-[21px]" />

          {/* time axis */}
          <div className="relative h-[21px] shrink-0 text-[12px] text-[#6b7280]">
            {[["12", 181.5], ["14", 269.5], ["16", 357.5], ["18", 445.5], ["20", 533.5], ["22", 621.5], ["02", 797.5], ["04", 885.5], ["06", 973.5], ["10", 1149.5], ["12", 1237.5], ["14", 1325.5], ["16", 1413.5], ["18", 1501.5]].map(([t, x]) => (
              <span key={String(x)} className="absolute top-[3px] w-8 text-center leading-4" style={{ left: (x as number) - 56 - 16 + 0.5 }}>{t}</span>
            ))}
            <span className="absolute left-[634px] top-[3px] w-10 text-center leading-4 font-bold text-[#5b6576]">5月 16</span>
            <span className="absolute left-[945px] top-[1px] flex h-[18px] w-[121.5px] items-center justify-center bg-[#888c94] text-white">2021-05-16 08:00:00</span>
            <span className="absolute left-[1506px] top-[3px] leading-4 text-[#3f8ef0]">对数</span>
            <span className="absolute left-[1541px] top-[3px] leading-4">%</span>
            <span className="absolute left-[1559px] top-[3px] leading-4 text-[#3f8ef0]">自动</span>
          </div>
        </main>
        <div className="w-[6px] shrink-0" />

        {/* right panel */}
        <section className="flex w-[177px] shrink-0 flex-col overflow-hidden bg-white text-[12px]">
          <div className="h-[75px] shrink-0 overflow-hidden border-b border-[#eef0f3] pl-[13px] whitespace-nowrap">
            <div className="mt-[8px] flex items-baseline">
              <span className="text-[17.5px] leading-[22px] font-bold text-[#0f1b33]">BTC/USDT</span>
              <span className="ml-[5px] text-[14px] text-[#6b7280]">火币全球站</span>
            </div>
            <div className="mt-[6px] flex h-[18px] items-center text-[#9ca3af]">
              <span className="w-[154px] shrink-0">24H额(￥): <span className="text-[#374151]">87.7亿</span></span><span>24H</span>
            </div>
            <div className="flex h-[18px] items-center text-[#9ca3af]">
              <span className="w-[154px] shrink-0">净流入(￥): <span className="text-[#f04a5b]">-3.03亿</span></span><span>24H</span>
            </div>
          </div>
          <div className="flex h-[31px] shrink-0 items-center border-b border-[#eef0f3] pl-[14px] text-[13px] text-[#6b7280]">
            2位小数<span className="ml-[1px] h-0 w-0 border-x-[3px] border-t-[4px] border-x-transparent border-t-[#9ca3af]" />
          </div>
          <div className="flex h-[31px] shrink-0 items-start border-b border-[#eef0f3] pl-[14px] pt-[8px] whitespace-nowrap">
            <span className="w-[120px] shrink-0"><span className="border-b border-dotted border-[#6b7280] pb-[2px] text-[#374151]">委比：</span><span className="text-[#f04a5b]">-39.81%</span></span>
            <span><span className="border-b border-dotted border-[#6b7280] pb-[2px] text-[#374151]">委差：</span><span className="text-[#f04a5b]">-2</span></span>
          </div>
          <div className="flex h-[26px] shrink-0 items-center justify-between pl-[13px] pr-[10px] text-[#9ca3af]">
            <span>价格(USDT)</span><span>数量(BTC)</span>
          </div>
          <Book rows={ASKS} color="#ec4c5c" bg="#fdeeee" widths={{ "49518.52": 59, "49514.13": 177, "49513.83": 102 }} />
          <div className="h-[52px] shrink-0 pl-[12.5px] pt-[8px]">
            <div className="text-[20px] leading-6 font-bold text-[#00b07c]">49493.68</div>
            <div className="mt-[2px] pl-[2px] text-[12px] leading-4 text-[#9ca3af]">￥324678.54</div>
          </div>
          <Book rows={BIDS} color="#14b885" bg="#e6f7f1" widths={{ "49505.26": 104, "49493.68": 177 }} />
        </section>

        {/* collapse handles */}
        <div className="absolute left-[50px] top-[463px] flex h-[38px] w-[6px] items-center justify-center bg-[#e5e7eb]">
          <span className="h-0 w-0 border-y-[4px] border-l-[4px] border-y-transparent border-l-[#8d95a1]" />
        </div>
        <div className="absolute left-[1639px] top-[463px] flex h-[38px] w-[6px] items-center justify-center bg-[#e5e7eb]">
          <span className="h-0 w-0 border-y-[4px] border-l-[4px] border-y-transparent border-l-[#8d95a1]" />
        </div>
        <div className="absolute bottom-0 left-[849px] flex h-[6px] w-[38px] items-center justify-center bg-[#dfe2e7]">
          <span className="h-0 w-0 border-x-[4px] border-b-[4px] border-x-transparent border-b-[#8d95a1]" />
        </div>
      </div>
    </div>
  );
}
